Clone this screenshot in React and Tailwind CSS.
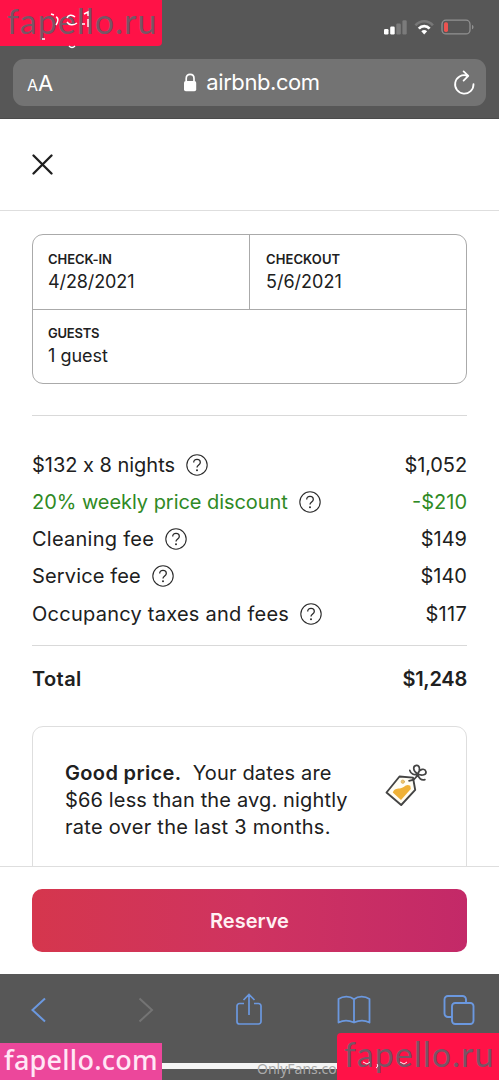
const fees = [
  { label: "$132 x 8 nights", amount: "$1,052", labelClass: "tracking-[-0.02px]", amountClass: "tracking-[-0.1px]" },
  { label: "20% weekly price discount", amount: "-$210", labelClass: "tracking-[-0.05px] text-[#2f8a25]", amountClass: "tracking-[0px] text-[#2f8a25]" },
  { label: "Cleaning fee", amount: "$149", labelClass: "tracking-[0.25px]", amountClass: "tracking-[0px]" },
  { label: "Service fee", amount: "$140", labelClass: "tracking-[0.15px]", amountClass: "tracking-[0px]" },
  { label: "Occupancy taxes and fees", amount: "$117", labelClass: "tracking-[0.25px]", amountClass: "tracking-[0.3px]" },
];

const HelpIcon = () => (
  <svg width="22" height="22" viewBox="0 0 22 22" fill="none" stroke="#2b2b2b" strokeWidth="1.1" className="shrink-0">
    <circle cx="11" cy="11" r="10.2" />
    <path d="M7.700 8.500C7.700 6.400 9 5.300 11 5.300s3.300 1.200 3.300 3.100c0 2.500-3.300 2.600-3.300 5.200" strokeWidth="1.300" />
    <circle cx="11" cy="16.200" r="1" fill="#2b2b2b" stroke="none" />
  </svg>
);

const StatusIcons = () => (
  <svg width="92" height="18" viewBox="0 0 92 18" fill="none">
    <rect x="0" y="10" width="4.5" height="5.5" rx="1.2" fill="#fff" />
    <rect x="6.2" y="7.5" width="4.5" height="8" rx="1.2" fill="#fff" />
    <rect x="12.3" y="4.5" width="4.5" height="11" rx="1.2" fill="#7b7b7b" />
    <rect x="18.4" y="1.3" width="4.3" height="14.2" rx="1.2" fill="#7b7b7b" />
    <path d="M31.5 6.3c4.7-5.4 12.7-5.4 17.4 0" stroke="#777" strokeWidth="2.7" />
    <path d="M34.8 9.6c3-3.4 7.8-3.4 10.8 0" stroke="#fff" strokeWidth="2.8" />
    <path d="M37.3 12.2c1.7-1.7 4.1-1.7 5.8 0l-2.9 3.2z" fill="#fff" />
    <rect x="58" y="1.2" width="28" height="13.7" rx="4" stroke="#929292" strokeWidth="1.3" />
    <rect x="60" y="3.2" width="4" height="9.7" rx="1.7" fill="#ed5350" />
    <path d="M88 6c2 .4 2 3.8 0 4.2z" fill="#929292" />
  </svg>
);

const LockIcon = () => (
  <svg width="14" height="19" viewBox="0 0 14 19" fill="none">
    <rect x="1" y="8" width="12.2" height="10.2" rx="1.8" fill="#fff" />
    <path d="M3.2 8.5V5.4C3.2 2.8 4.8 1.4 7.1 1.4S11 2.8 11 5.4v3.1" stroke="#fff" strokeWidth="1.7" />
  </svg>
);

const ReloadIcon = () => (
  <svg width="22" height="26" viewBox="0 0 22 26" fill="none" stroke="#fff" strokeWidth="1.8" strokeLinecap="round" strokeLinejoin="round">
    <path d="M14 5.600A9.200 9.200 0 1 0 20.500 14.100M10.600 1.400l4.700 4.500-4.700 4.700" />
  </svg>
);

const PriceTag = () => (
  <svg width="44" height="46" viewBox="0 0 44 46" fill="none" stroke="#444" strokeWidth="1.9" strokeLinejoin="round" strokeLinecap="round">
    <path d="M1.500 29.500 14.500 13.500l13.500 1.100 2.200 12.300L16.200 42Z" fill="#fffdf4" />
    <path d="M7.800 29.500c1.100-3.500 3.700-3.900 6.700-4.100 5-.3 6.300-5.500 10.800-2.600l.5 3.100-9.800 11Z" fill="#efb137" stroke="none" />
    <circle cx="17.800" cy="18.700" r="1.700" fill="#efc66e" stroke="#d4aa58" strokeWidth=".7" />
    <path d="M24 17.800c4.800-.4 7.500-3.200 8.900-6.700M32.900 11.100c-5.500-3.100-5.100-8.300-1.500-8.700 3.500-.3 4.100 4.800 1.500 8.700Zm0 0c1.300-5.500 7-6.100 8-2.700.9 3.300-3.800 4.700-8 2.700Zm0 0c-4.100 1.800-7.100-.7-8.100-3.700m8.100 3.700c.2 4.200 3.500 6.500 7 5.500" strokeWidth="1.700" />
  </svg>
);

const Toolbar = () => (
  <div className="flex h-[106px] shrink-0 items-start bg-[#575757] pt-[18px] pl-[30px] text-[#6b98df]">
    <svg width="17" height="36" viewBox="0 0 17 36" fill="none" stroke="currentColor" strokeWidth="2"><path d="M15 6.500 2.500 18 15 29.500" /></svg>
    <svg width="17" height="36" viewBox="0 0 17 36" fill="none" stroke="#747474" strokeWidth="2" className="ml-[90px]"><path d="m2.500 6.500 12.500 11.500-12.500 11.500" /></svg>
    <svg width="28" height="36" viewBox="0 0 28 36" fill="none" stroke="currentColor" strokeWidth="1.7" className="ml-[81px]"><path d="M9 11.500H4.500A2.500 2.500 0 0 0 2 14v15.500A2.500 2.500 0 0 0 4.500 32h19a2.500 2.500 0 0 0 2.500-2.500V14a2.500 2.500 0 0 0-2.500-2.500H19M14 23V3M8.500 8 14 2.500 19.500 8" /></svg>
    <svg width="34" height="36" viewBox="0 0 34 36" fill="none" stroke="currentColor" strokeWidth="1.8" strokeLinejoin="round" className="ml-[74px]"><path d="M17 7.200C12.500 3.500 6 4 1.500 7v23.500c5-2.600 10.500-2.300 15.500 0 5-2.300 10.500-2.600 15.500 0V7C28 4 21.500 3.500 17 7.200Zm0 0v23.300" /></svg>
    <svg width="32" height="36" viewBox="0 0 32 36" fill="none" stroke="currentColor" strokeWidth="1.9" className="ml-[72px]"><path d="M9 25H5a3.500 3.500 0 0 1-3.500-3.500V7.500A3.500 3.500 0 0 1 5 4h14.500A3.500 3.500 0 0 1 23 7.500V11" /><rect x="9" y="11" width="21.500" height="21" rx="3.200" /></svg>
  </div>
);

export default function App() {
  return (
    <div className="relative flex h-[1080px] w-[499px] flex-col overflow-hidden bg-white font-['Inter',sans-serif] text-[#202020]">
      <header className="h-[119px] shrink-0 border-b border-[#4b4b4b] bg-[#575757]">
        <div className="flex h-[59px] items-start justify-end pt-[19px] pr-[23px]">
          <StatusIcons />
        </div>
        <div className="mx-[13px] flex h-[47px] items-center justify-between rounded-[11px] bg-[#737373] pr-[11px] pl-[14px] text-white">
          <div className="flex w-[50px] items-baseline leading-none">
            <span className="text-[16px]">A</span>
            <span className="text-[22px]">A</span>
          </div>
          <div className="flex items-center gap-[9px] pl-px">
            <LockIcon />
            <span className="text-[22px] tracking-[-0.43px]">airbnb.com</span>
          </div>
          <div className="flex w-[50px] justify-end"><ReloadIcon /></div>
        </div>
      </header>

      <div className="flex h-[92px] shrink-0 items-center border-b border-[#dedede] pl-8">
        <svg width="21" height="21" viewBox="0 0 21 21" stroke="#1e1e1e" strokeWidth="2.3" strokeLinecap="round"><path d="m1.500 1.500 18 18m0-18-18 18" /></svg>
      </div>

      <main className="min-h-0 flex-1 overflow-hidden px-8 pt-[23px]">
        <section className="h-[150px] rounded-[11px] border border-[#aaa]">
          <div className="flex h-[75px] border-b border-[#aaa]">
            <div className="w-[217px] border-r border-[#aaa] pt-[15px] pl-[15px]">
              <div className="text-[13px] leading-[18px] font-semibold tracking-[-0.05px]">CHECK-IN</div>
              <div className="mt-[2px] text-[18px] leading-6 tracking-[-0.1px]">4/28/2021</div>
            </div>
            <div className="pt-[15px] pl-4">
              <div className="text-[13px] leading-[18px] font-semibold tracking-[0.1px]">CHECKOUT</div>
              <div className="mt-[2px] text-[18px] leading-6">5/6/2021</div>
            </div>
          </div>
          <div className="pt-[14px] pl-[15px]">
            <div className="text-[13px] leading-[18px] font-semibold tracking-[-0.25px]">GUESTS</div>
            <div className="mt-[2px] text-[18px] leading-6">1 guest</div>
          </div>
        </section>

        <section className="mt-[31px] border-t border-b border-[#d9d9d9] pt-[30px] pb-[13px]">
          {fees.map((fee) => (
            <div key={fee.label} className="flex h-[37.25px] items-center justify-between text-[20px]">
              <div className="flex items-center gap-[11px]">
                <span className={fee.labelClass}>{fee.label}</span>
                <HelpIcon />
              </div>
              <span className={fee.amountClass}>{fee.amount}</span>
            </div>
          ))}
        </section>

        <div className="mt-[18px] flex h-[30px] items-center justify-between text-[20px] font-semibold">
          <span className="tracking-[0.4px]">Total</span>
          <span className="tracking-[-0.25px]">$1,248</span>
        </div>

        <section className="mt-8 flex h-[160px] justify-between rounded-t-[11px] border border-[#dedede] pt-[33px] pr-[37px] pl-8">
          <p className="text-[20px] leading-[26.7px] whitespace-nowrap">
            <span className="font-semibold tracking-[0.35px]">Good price.</span>&nbsp; <span className="tracking-[0.15px]">Your dates are</span><br />
            <span className="tracking-[0.15px]">$66 less than the avg. nightly</span><br />
            <span className="tracking-[0.27px]">rate over the last 3 months.</span>
          </p>
          <div className="mt-[3px]"><PriceTag /></div>
        </section>
      </main>

      <footer className="h-[108px] shrink-0 border-t border-[#dedede] bg-white px-8 pt-[22px]">
        <button className="h-[63px] w-full rounded-[10px] bg-linear-to-r from-[#d5364d] via-[#cf3360] to-[#c32968] text-[20px] font-semibold text-[#fff1f4]">Reserve</button>
      </footer>
      <Toolbar />

      <div className="absolute top-0 left-0 h-[46px] w-[162px] rounded-br-[4px] bg-[#ff1247] pl-[7px] font-['Lato',sans-serif] text-[34px] leading-[41px] tracking-[1px] text-[#785565]">fapello.ru</div>
      <svg className="absolute top-2 left-10" width="54" height="42" viewBox="0 0 54 42" fill="none" stroke="#fff" strokeWidth="1.400">
        <path d="M11 6l3 1m2 2c3 1 2 5 0 8M27 10c1-3 5-4 8-1m-8 5c2 3 6 4 10 1m7-9 4-2v4m0 3v8m-6-3h3M2 31h3m24 7c2 2 4 2 6 0" />
      </svg>
      <div className="absolute right-0 bottom-[11px] h-[6px] w-[337px] bg-[#f4f4f4]" />
      <div className="absolute bottom-0 left-[257px] font-['Noto_Sans',sans-serif] text-[14px] leading-[22px] text-[#aaa]">OnlyFans.com</div>
      <div className="absolute bottom-0 left-0 h-[37px] w-[162px] bg-[#ec479b] pl-1 font-['Noto_Sans',sans-serif] text-[27px] leading-[34px] font-medium tracking-[0.25px] text-[#ffe7f6]">fapello.com</div>
      <div className="absolute right-0 bottom-0 h-[47px] w-[162px] rounded-tl-[4px] bg-[#ff1247] pl-[7px] font-['Lato',sans-serif] text-[34px] leading-[41px] tracking-[1px] text-[#785565]">fapello.ru</div>
      <svg className="absolute right-[83px] bottom-2" width="54" height="12" viewBox="0 0 54 12" fill="none" stroke="#fff1f4">
        <path d="M1 2l4 2 3-2m6 6c2-1 2-3 1-4m23-2 4 2 3-2" />
      </svg>
    </div>
  );
}
